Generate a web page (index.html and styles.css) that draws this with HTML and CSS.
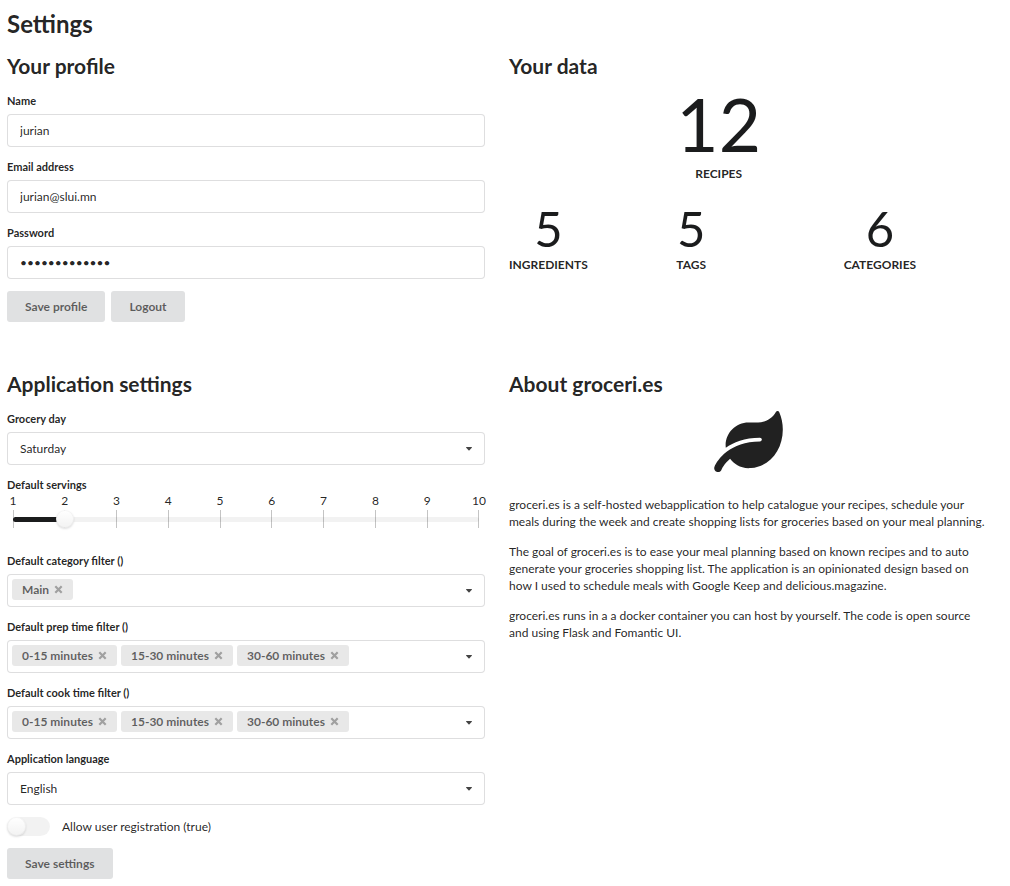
FILE: index.html
```html
<!DOCTYPE html>
<html lang="en">
<head>
<meta charset="utf-8">
<meta name="viewport" content="width=device-width, initial-scale=1">
<title>Settings</title>
<link rel="stylesheet" href="styles.css">
</head>
<body>
<svg class="sprite" aria-hidden="true">
  <symbol id="caret" viewBox="0 0 6 4"><path d="M.4 0h5.200q.6.300.2.800L3.500 3.200q-.5.400-1 0L.2.800Q-.2.300.4 0z"/></symbol>
  <symbol id="cross" viewBox="0 0 9 9"><path d="M1.300 1.300l6.400 6.400M7.700 1.300L1.300 7.700" fill="none" stroke="currentColor" stroke-width="2.200"/></symbol>
</svg>
<main class="page">
  <h1 class="title">Settings</h1>
  <div class="grid">
    <section>
      <h2 class="heading">Your profile</h2>
      <form class="form">
        <div class="field">
          <label class="label" for="name">Name</label>
          <input class="control" id="name" type="text" value="jurian">
        </div>
        <div class="field">
          <label class="label" for="email">Email address</label>
          <input class="control" id="email" type="email" value="jurian@slui.mn">
        </div>
        <div class="field">
          <label class="label" for="password">Password</label>
          <input class="control" id="password" type="password" value="correcthorse1">
        </div>
        <div class="actions">
          <button class="button" type="button">Save profile</button>
          <button class="button" type="button">Logout</button>
        </div>
      </form>
    </section>

    <section>
      <h2 class="heading heading-stats">Your data</h2>
      <div class="stats">
        <div class="stat stat-main"><span class="value value-huge">12</span><span class="caption">Recipes</span></div>
        <div class="stat"><span class="value">5</span><span class="caption">Ingredients</span></div>
        <div class="stat"><span class="value">5</span><span class="caption">Tags</span></div>
        <div class="stat"><span class="value">6</span><span class="caption">Categories</span></div>
      </div>
    </section>

    <section>
      <h2 class="heading">Application settings</h2>
      <form class="form">
        <div class="field">
          <label class="label" for="day">Grocery day</label>
          <div class="dropdown">
            <select class="control" id="day"><option>Saturday</option></select>
            <svg class="caret" aria-hidden="true"><use href="#caret"/></svg>
          </div>
        </div>
        <div class="field field-slider">
          <label class="label" for="servings">Default servings</label>
          <div class="slider">
            <ol class="ticks" aria-hidden="true">
              <li>1</li><li>2</li><li>3</li><li>4</li><li>5</li><li>6</li><li>7</li><li>8</li><li>9</li><li>10</li>
            </ol>
            <div class="track"><div class="fill" style="width: 11.1%"></div></div>
            <input class="range" id="servings" type="range" min="1" max="10" value="2">
          </div>
        </div>
        <div class="field">
          <span class="label" id="category">Default category filter ()</span>
          <div class="dropdown">
            <div class="control chips" role="group" aria-labelledby="category">
              <span class="chip">Main<button class="remove" type="button" aria-label="Remove Main"><svg class="cross"><use href="#cross"/></svg></button></span>
            </div>
            <svg class="caret" aria-hidden="true"><use href="#caret"/></svg>
          </div>
        </div>
        <div class="field">
          <span class="label" id="prep">Default prep time filter ()</span>
          <div class="dropdown">
            <div class="control chips" role="group" aria-labelledby="prep">
              <span class="chip">0-15 minutes<button class="remove" type="button" aria-label="Remove 0-15 minutes"><svg class="cross"><use href="#cross"/></svg></button></span>
              <span class="chip">15-30 minutes<button class="remove" type="button" aria-label="Remove 15-30 minutes"><svg class="cross"><use href="#cross"/></svg></button></span>
              <span class="chip">30-60 minutes<button class="remove" type="button" aria-label="Remove 30-60 minutes"><svg class="cross"><use href="#cross"/></svg></button></span>
            </div>
            <svg class="caret" aria-hidden="true"><use href="#caret"/></svg>
          </div>
        </div>
        <div class="field">
          <span class="label" id="cook">Default cook time filter ()</span>
          <div class="dropdown">
            <div class="control chips" role="group" aria-labelledby="cook">
              <span class="chip">0-15 minutes<button class="remove" type="button" aria-label="Remove 0-15 minutes"><svg class="cross"><use href="#cross"/></svg></button></span>
              <span class="chip">15-30 minutes<button class="remove" type="button" aria-label="Remove 15-30 minutes"><svg class="cross"><use href="#cross"/></svg></button></span>
              <span class="chip">30-60 minutes<button class="remove" type="button" aria-label="Remove 30-60 minutes"><svg class="cross"><use href="#cross"/></svg></button></span>
            </div>
            <svg class="caret" aria-hidden="true"><use href="#caret"/></svg>
          </div>
        </div>
        <div class="field">
          <label class="label" for="language">Application language</label>
          <div class="dropdown">
            <select class="control" id="language"><option>English</option></select>
            <svg class="caret" aria-hidden="true"><use href="#caret"/></svg>
          </div>
        </div>
        <label class="toggle-row"><input class="toggle" type="checkbox">Allow user registration (true)</label>
        <div class="actions">
          <button class="button" type="button">Save settings</button>
        </div>
      </form>
    </section>

    <section>
      <h2 class="heading">About groceri.es</h2>
      <svg class="leaf" viewBox="0 0 576 512" aria-hidden="true"><path d="M546.2 9.7c-5.600-12.500-21.600-13-28.300-1.200C486.900 62.400 431.400 96 368 96h-80C182 96 96 182 96 288c0 7 .8 13.700 1.500 20.500C161.300 262.800 253.400 224 384 224c8.800 0 16 7.200 16 16s-7.200 16-16 16C132.600 256 26 410.100 2.400 468c-6.600 16.300 1.200 34.900 17.500 41.600 16.400 6.800 35-1.100 41.800-17.300 1.500-3.600 20.900-47.900 71.900-90.600 32.400 43.900 94 85.800 174.900 77.200C465.500 467.500 576 326.700 576 154.300c0-50.200-10.800-102.200-29.800-144.600z"/></svg>
      <div class="about">
        <p>groceri.es is a self-hosted webapplication to help catalogue your recipes, schedule your meals during the week and create shopping lists for groceries based on your meal planning.</p>
        <p>The goal of groceri.es is to ease your meal planning based on known recipes and to auto generate your groceries shopping list. The application is an opinionated design based on how I used to schedule meals with Google Keep and delicious.magazine.</p>
        <p>groceri.es runs in a a docker container you can host by yourself. The code is open source and using Flask and Fomantic UI.</p>
      </div>
    </section>
  </div>
</main>
</body>
</html>
```
FILE: styles.css
```css
*, *::before, *::after { box-sizing: border-box; }

body {
  margin: 0;
  background: #fff;
  color: rgba(0, 0, 0, .87);
  font: 12px/17px Lato, "Liberation Sans", sans-serif;
}

input, select, button { font: inherit; color: inherit; }

h1, h2, p, ol { margin: 0; padding: 0; }

.sprite { display: block; width: 0; height: 0; }

.page { padding: 9px 23px 7px 7px; }

.title { font-size: 24px; line-height: 30px; }

.heading { margin-bottom: 14px; font-size: 21px; line-height: 26px; }
.heading-stats { margin-bottom: 9px; }

.grid {
  display: grid;
  grid-template-columns: 1fr 1fr;
  gap: 49px 24px;
  margin-top: 14px;
}

.form { display: flex; flex-direction: column; gap: 12px; }

.label {
  display: block;
  margin-bottom: 5px;
  font-size: 11px;
  font-weight: 700;
  line-height: 16px;
}

.control {
  display: block;
  width: 100%;
  height: 33px;
  padding: 0 12px;
  border: 1px solid rgba(34, 36, 38, .15);
  border-radius: 4px;
  background: #fff;
  outline: 0;
  appearance: none;
}

.dropdown { position: relative; }

.caret {
  position: absolute;
  top: 15px;
  right: 13px;
  width: 6px;
  height: 4px;
  fill: #444;
  pointer-events: none;
}

.actions { display: flex; gap: 6px; }

.button {
  height: 31px;
  padding: 0 18px;
  border: 0;
  border-radius: 3px;
  background: #e0e1e2;
  color: rgba(0, 0, 0, .6);
  font-weight: 700;
}

.chips {
  display: flex;
  gap: 4px;
  height: auto;
  min-height: 33px;
  padding: 4px;
}

.chip {
  display: flex;
  align-items: center;
  gap: 5px;
  height: 21px;
  padding: 0 10px;
  border-radius: 3px;
  background: #e8e8e8;
  color: rgba(0, 0, 0, .6);
  font-weight: 700;
}

.remove {
  display: flex;
  padding: 0;
  border: 0;
  background: none;
  color: #a0a0a0;
}

.cross { width: 9px; height: 9px; }

.field-slider { margin-bottom: 13px; }
.field-slider .label { margin-bottom: 0; }

.slider { display: grid; }
.slider > * { grid-area: 1 / 1; }

.ticks { display: flex; justify-content: space-between; list-style: none; }

.ticks li {
  display: flex;
  flex-direction: column;
  align-items: center;
  width: 12px;
  line-height: 15px;
}

.ticks li::after {
  content: "";
  width: 1px;
  height: 18px;
  margin-top: 2px;
  background: #c4c4c4;
}

.track {
  align-self: end;
  height: 5px;
  margin: 0 6px 6px;
  border-radius: 4px;
  background: rgba(0, 0, 0, .05);
}

.fill { height: 5px; border-radius: 4px; background: #1b1c1d; }

.range {
  align-self: end;
  height: 18px;
  margin: 0 -3px;
  background: none;
  appearance: none;
}

.range::-webkit-slider-thumb {
  width: 18px;
  height: 18px;
  border-radius: 50%;
  background: #fff linear-gradient(transparent, rgba(0, 0, 0, .05));
  box-shadow: 0 1px 2px rgba(34, 36, 38, .15), 0 0 0 1px rgba(34, 36, 38, .04) inset;
  appearance: none;
}

.toggle-row { display: flex; align-items: center; gap: 12px; height: 19px; }

.toggle {
  width: 43px;
  height: 19px;
  margin: 0;
  border-radius: 10px;
  background: rgba(0, 0, 0, .05);
  appearance: none;
}

.toggle::before {
  content: "";
  display: block;
  width: 19px;
  height: 19px;
  border-radius: 50%;
  background: #fff linear-gradient(transparent, rgba(0, 0, 0, .05));
  box-shadow: 0 1px 2px rgba(34, 36, 38, .15), 0 0 0 1px rgba(34, 36, 38, .04) inset;
}

.stats {
  display: grid;
  grid-template-columns: repeat(3, 1fr);
  gap: 22px 24px;
  justify-items: start;
}

.stat { display: flex; flex-direction: column; align-items: center; gap: 3px; }
.stat-main { grid-column: 2; gap: 4px; }
.stat-main + .stat { grid-column: 1; }

.value { color: #1b1c1d; font-size: 49px; line-height: 49px; }
.value-huge { font-size: 73px; line-height: 73px; }

.caption { font-weight: 700; text-transform: uppercase; }

.leaf { display: block; width: 69px; height: 61px; margin: 0 auto 24px; fill: #212121; }

.about { display: flex; flex-direction: column; gap: 13px; }
```
